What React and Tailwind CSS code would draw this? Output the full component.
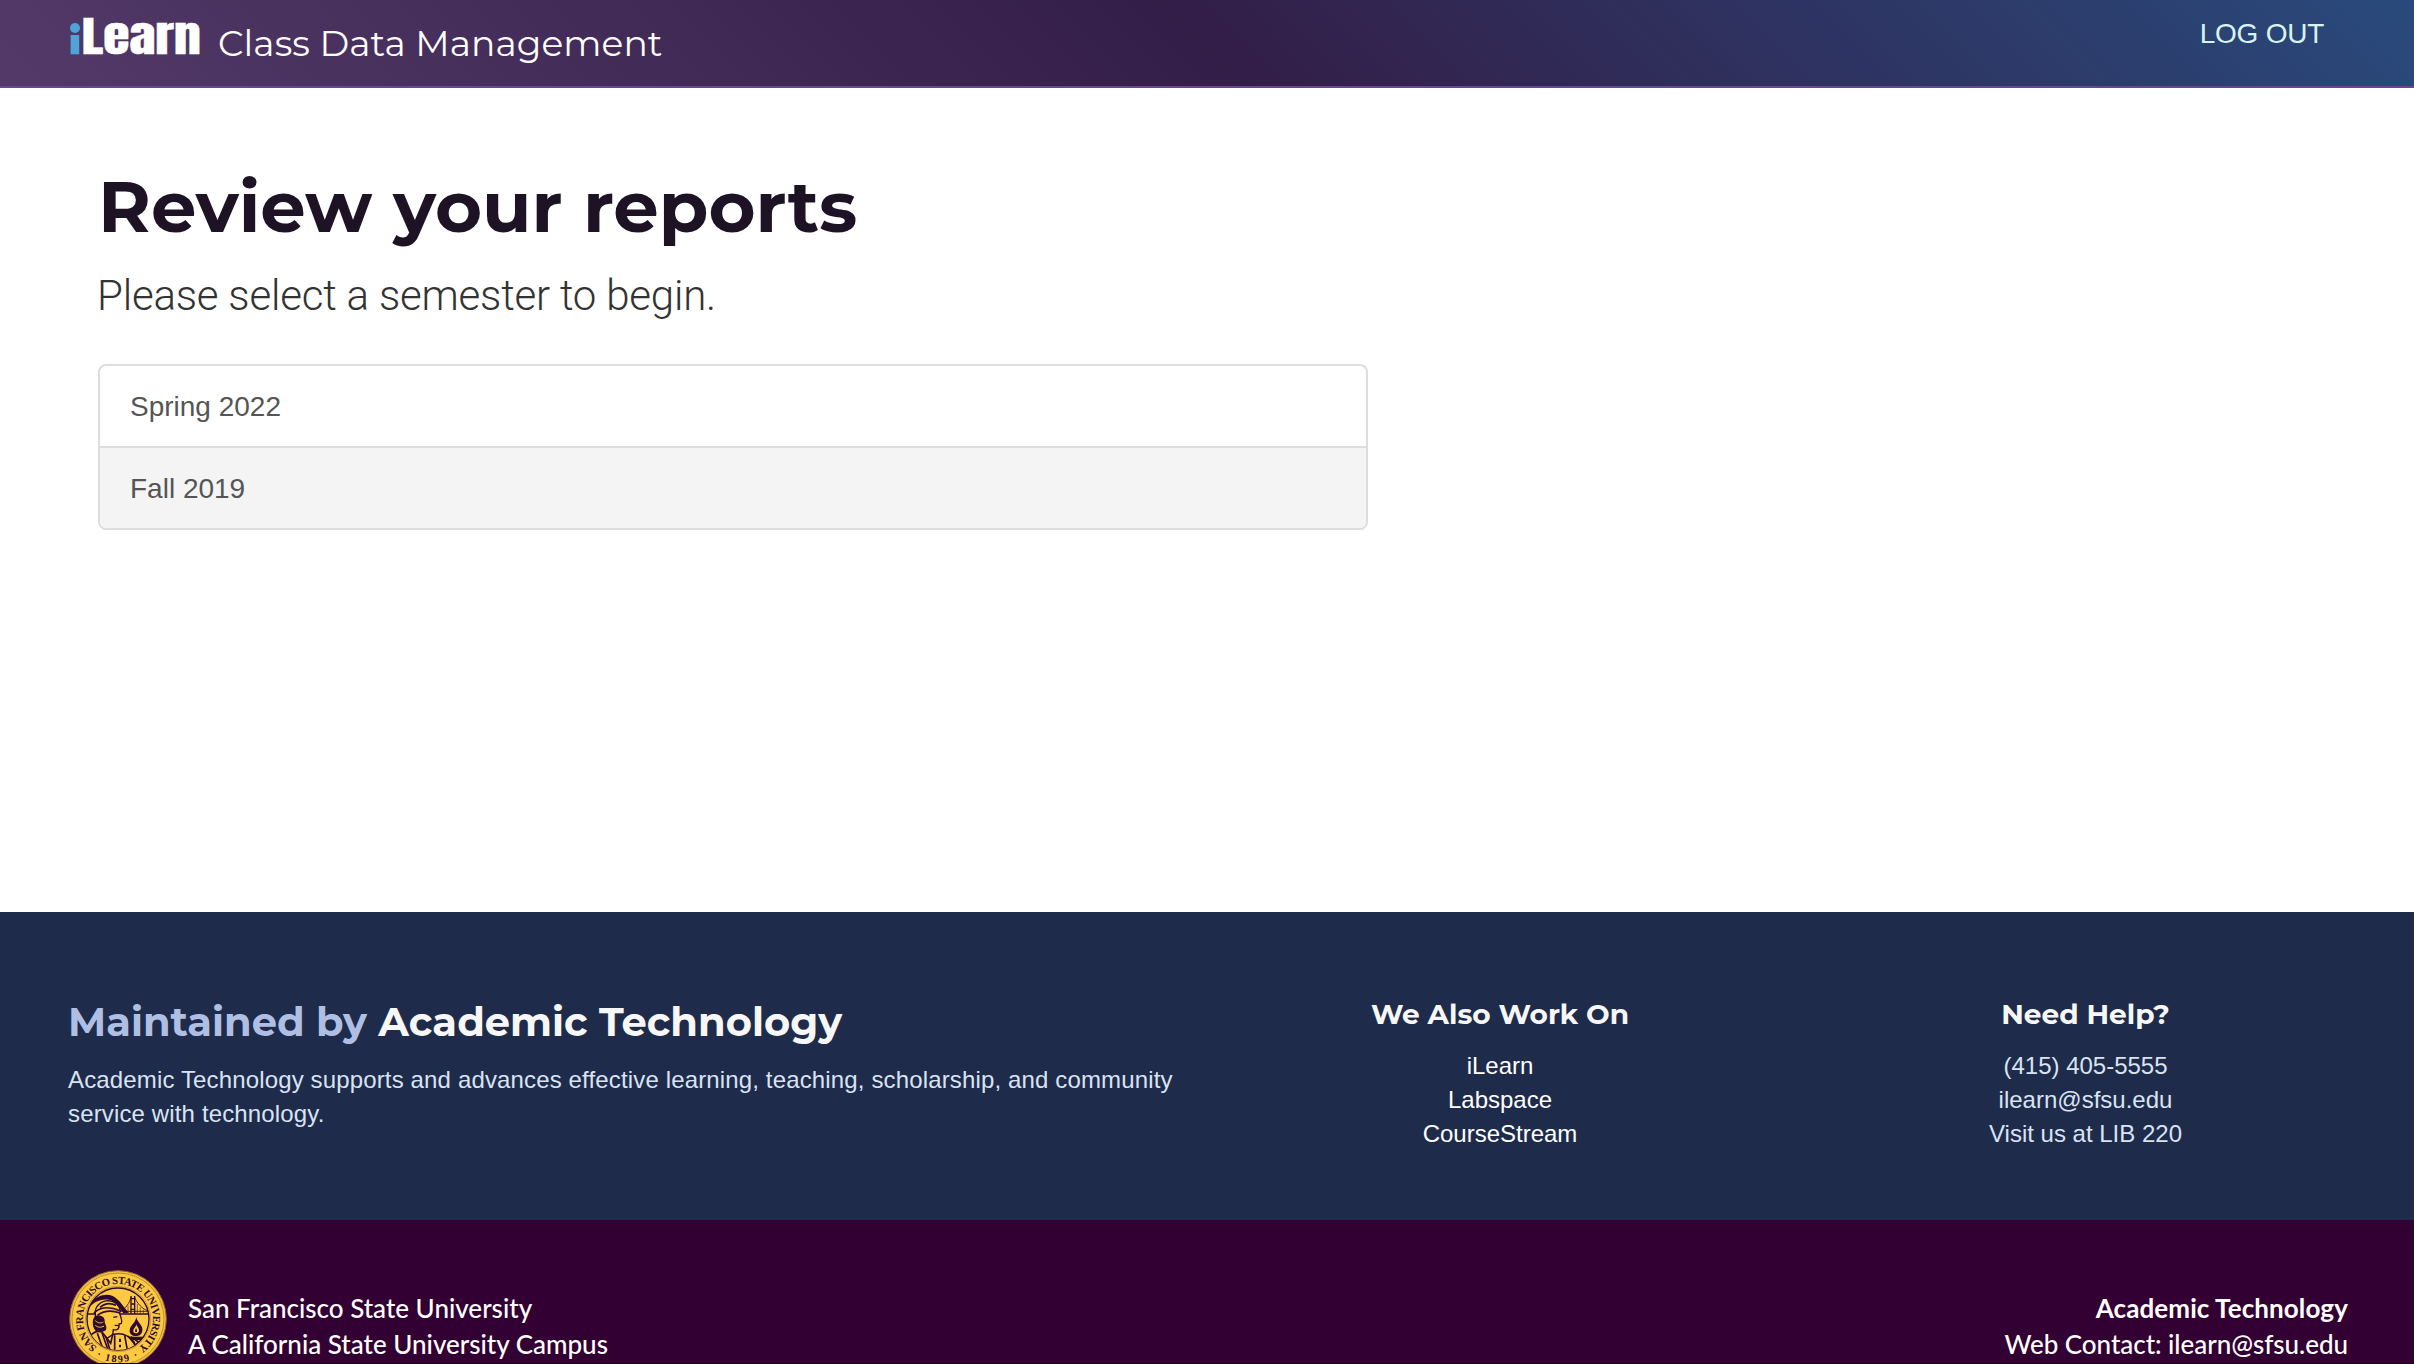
import React from 'react';

const INK = '#2f0a2e';

function ILearnLogo() {
  return (
    <svg className="block" width="134" height="60" viewBox="0 -12 134 60" role="img" aria-label="iLearn">
      <ellipse cx="5" cy="10" rx="5" ry="5" fill="#4fa3d9" />
      <rect x="0.6" y="17" width="8.6" height="19.3" fill="#4fa3d9" />
      <text
        transform="translate(11.8 36.2) scale(1.28 1)"
        fill="#fff"
        stroke="#fff"
        strokeWidth="0.5"
        fontFamily="Anton, Roboto, sans-serif"
        fontSize="42"
      >
        Learn
      </text>
    </svg>
  );
}

function Seal() {
  return (
    <svg className="block shrink-0" width="98" height="98" viewBox="27 30 294 294" role="img" aria-label="University seal">
      <defs>
        <path id="ring" d="M 111.3 261.1 A 105 105 0 1 1 236.7 261.1" />
        <path id="year" d="M 100 283.7 A 130 130 0 0 0 248 283.7" />
        <clipPath id="scene"><circle cx="174" cy="177" r="93" /></clipPath>
      </defs>
      <circle cx="174" cy="177" r="145" fill="#f2bf3f" stroke="#8c6436" strokeWidth="3" />
      <circle cx="174" cy="177" r="138" fill="#fdc941" stroke="#c08f38" strokeWidth="3" />
      <circle cx="174" cy="177" r="98" fill="none" stroke="#b0803a" strokeWidth="2" />
      <circle cx="174" cy="177" r="93" fill="#fdc941" stroke={INK} strokeWidth="4" />
      <g fill={INK} fontFamily="'Liberation Serif', serif" fontWeight="700">
        <text fontSize="32">
          <textPath href="#ring" textLength="528" lengthAdjust="spacing">SAN FRANCISCO STATE UNIVERSITY</textPath>
        </text>
        <text fontSize="31">
          <textPath href="#year" startOffset="50%" textAnchor="middle" letterSpacing="5">· 1899 ·</textPath>
        </text>
      </g>
      <g clipPath="url(#scene)">
        <path d="M80 162H270" stroke={INK} strokeWidth="5" />
        <path d="M86 134C112 104 138 100 158 108C176 116 190 140 206 158L190 160C176 138 164 122 146 119C124 116 104 124 88 142Z" fill={INK} />
        <path d="M213 162V108M224 162V108M213 116H224M213 132H224M213 148H224" stroke={INK} strokeWidth="4" fill="none" />
        <path d="M184 152C198 144 208 130 214 110M223 110C232 132 246 146 266 154M184 154H266" stroke={INK} strokeWidth="2.5" fill="none" />
        <path d="M196 148V160M204 138V160M232 132V160M241 143V160M250 149V160" stroke={INK} strokeWidth="1.6" />
        <path d="M106 160C104 140 122 122 146 122C166 124 178 136 182 154L178 158C184 174 188 184 184 190L177 192C179 204 174 212 160 209L158 224L140 236L112 214C98 204 98 184 106 176Z" fill="#fdc941" stroke={INK} strokeWidth="4" />
        <path d="M102 160C114 144 142 136 180 152M112 166C128 154 148 148 178 158M120 142C134 130 152 128 168 136" stroke={INK} strokeWidth="5" fill="none" />
        <path d="M106 168C120 164 134 170 134 182C134 194 142 196 138 210C126 220 104 212 101 198C96 186 98 176 106 168Z" fill={INK} />
        <path d="M106 182C114 190 124 190 130 186M106 196C114 203 124 203 132 198" stroke="#fdc941" strokeWidth="3" fill="none" />
        <path d="M160 172L172 170M164 196L176 197" stroke={INK} strokeWidth="4" />
        <path d="M92 226C104 214 116 212 126 216L152 250L158 224C186 216 206 226 222 246L230 280H90Z" fill="#fdc941" stroke={INK} strokeWidth="5" />
        <path d="M112 220L130 270M126 218L144 270M138 230L150 270M164 226V270M194 226L202 270M204 228L232 262M212 230L244 252" stroke={INK} strokeWidth="5" />
        <path d="M180 236V246M180 254V262" stroke={INK} strokeWidth="6" />
        <path d="M229 172C232 188 250 196 247 212C245 224 236 228 228 228C216 228 208 222 209 210C210 196 226 190 229 172Z" fill={INK} />
        <path d="M229 192C230 200 238 204 237 213C236 218 232 220 228 220C222 220 219 216 220 211C221 204 228 202 229 192Z" fill="#fdc941" />
        <path d="M228 204C230 209 232 211 231 216H226C224 211 227 209 228 204Z" fill={INK} />
        <path d="M206 230H252L244 240H214Z" fill={INK} />
      </g>
    </svg>
  );
}

function Header() {
  return (
    <header className="flex h-[88px] items-start justify-between border-b-2 border-[#6b4690] bg-[linear-gradient(45deg,#533a69_0%,#331e48_50%,#294a7c_100%)] pr-[90px] pl-[70px] text-white">
      <div className="flex items-start">
        <div className="pt-1.5"><ILearnLogo /></div>
        <span className="ml-3.5 pt-[21px] font-['Montserrat','Inter',sans-serif] text-[36px] leading-[44px] tracking-[0.07px]">Class Data Management</span>
      </div>
      <a href="#logout" className="pt-[14px] text-[28px] leading-10 tracking-[-0.25px] text-[#d8f4f2]">LOG OUT</a>
    </header>
  );
}

function LinkColumn({ title, items, className }) {
  return (
    <section className="pt-[85px] text-center">
      <h3 className="font-['Montserrat','Inter',sans-serif] text-[28px] leading-[34px] font-bold text-[#f7f7f7]">{title}</h3>
      <ul className={className}>
        {items.map((item) => <li key={item}>{item}</li>)}
      </ul>
    </section>
  );
}

export default function App() {
  return (
    <div className="flex h-[1364px] flex-col overflow-hidden bg-white font-['Liberation_Sans',Arial,sans-serif]">
      <Header />
      <main className="h-[824px] pt-[74px] pl-[98px]">
        <h1 className="font-['Montserrat','Inter',sans-serif] text-[72px] leading-[88px] font-bold text-[#1d1324]">Review your reports</h1>
        <p className="mt-4 -ml-px font-[Roboto,sans-serif] text-[42px] leading-[60px] font-light tracking-[-0.2px] text-[#333]">Please select a semester to begin.</p>
        <ul className="mt-[38px] w-[1270px] divide-y-2 divide-[#ddd] overflow-hidden rounded-lg border-2 border-[#ddd] text-[28px] leading-[78px] text-[#555]">
          <li className="box-content h-[78px] px-[30px] pt-0.5">Spring 2022</li>
          <li className="box-content h-[78px] bg-[#f4f4f4] px-[30px] pt-0.5">Fall 2019</li>
        </ul>
      </main>
      <footer>
        <div className="grid h-[308px] grid-cols-[1140px_584px_587px] bg-[#1e2b4a] pl-[68px] text-2xl/[34px] text-[#dae3f3]">
          <section className="pt-[86px]">
            <h2 className="font-['Montserrat','Inter',sans-serif] text-[40px] leading-[48px] font-bold text-[#f7f7f7]">
              <span className="text-[#afbfe3]">Maintained by</span> Academic Technology
            </h2>
            <p className="mt-[17px] tracking-[0.145px]">Academic Technology supports and advances effective learning, teaching, scholarship, and community service with technology.</p>
          </section>
          <LinkColumn title="We Also Work On" items={['iLearn', 'Labspace', 'CourseStream']} className="mt-[18px] text-white" />
          <LinkColumn title="Need Help?" items={['(415) 405-5555', 'ilearn@sfsu.edu', 'Visit us at LIB 220']} className="mt-[18px]" />
        </div>
        <div className="flex h-36 items-start justify-between overflow-hidden border-b border-[#170016] bg-[#330033] pr-[66px] pl-[69px] font-[Lato,sans-serif] text-[26px] leading-9 font-medium text-white">
          <div className="flex items-start">
            <div className="pt-[50px]"><Seal /></div>
            <p className="ml-[21px] pt-[70px]">San Francisco State University<br />A California State University Campus</p>
          </div>
          <p className="pt-[70px] text-right tracking-[-0.04px]"><strong className="font-bold tracking-[0.1px]">Academic Technology</strong><br />Web Contact: ilearn@sfsu.edu</p>
        </div>
      </footer>
    </div>
  );
}
